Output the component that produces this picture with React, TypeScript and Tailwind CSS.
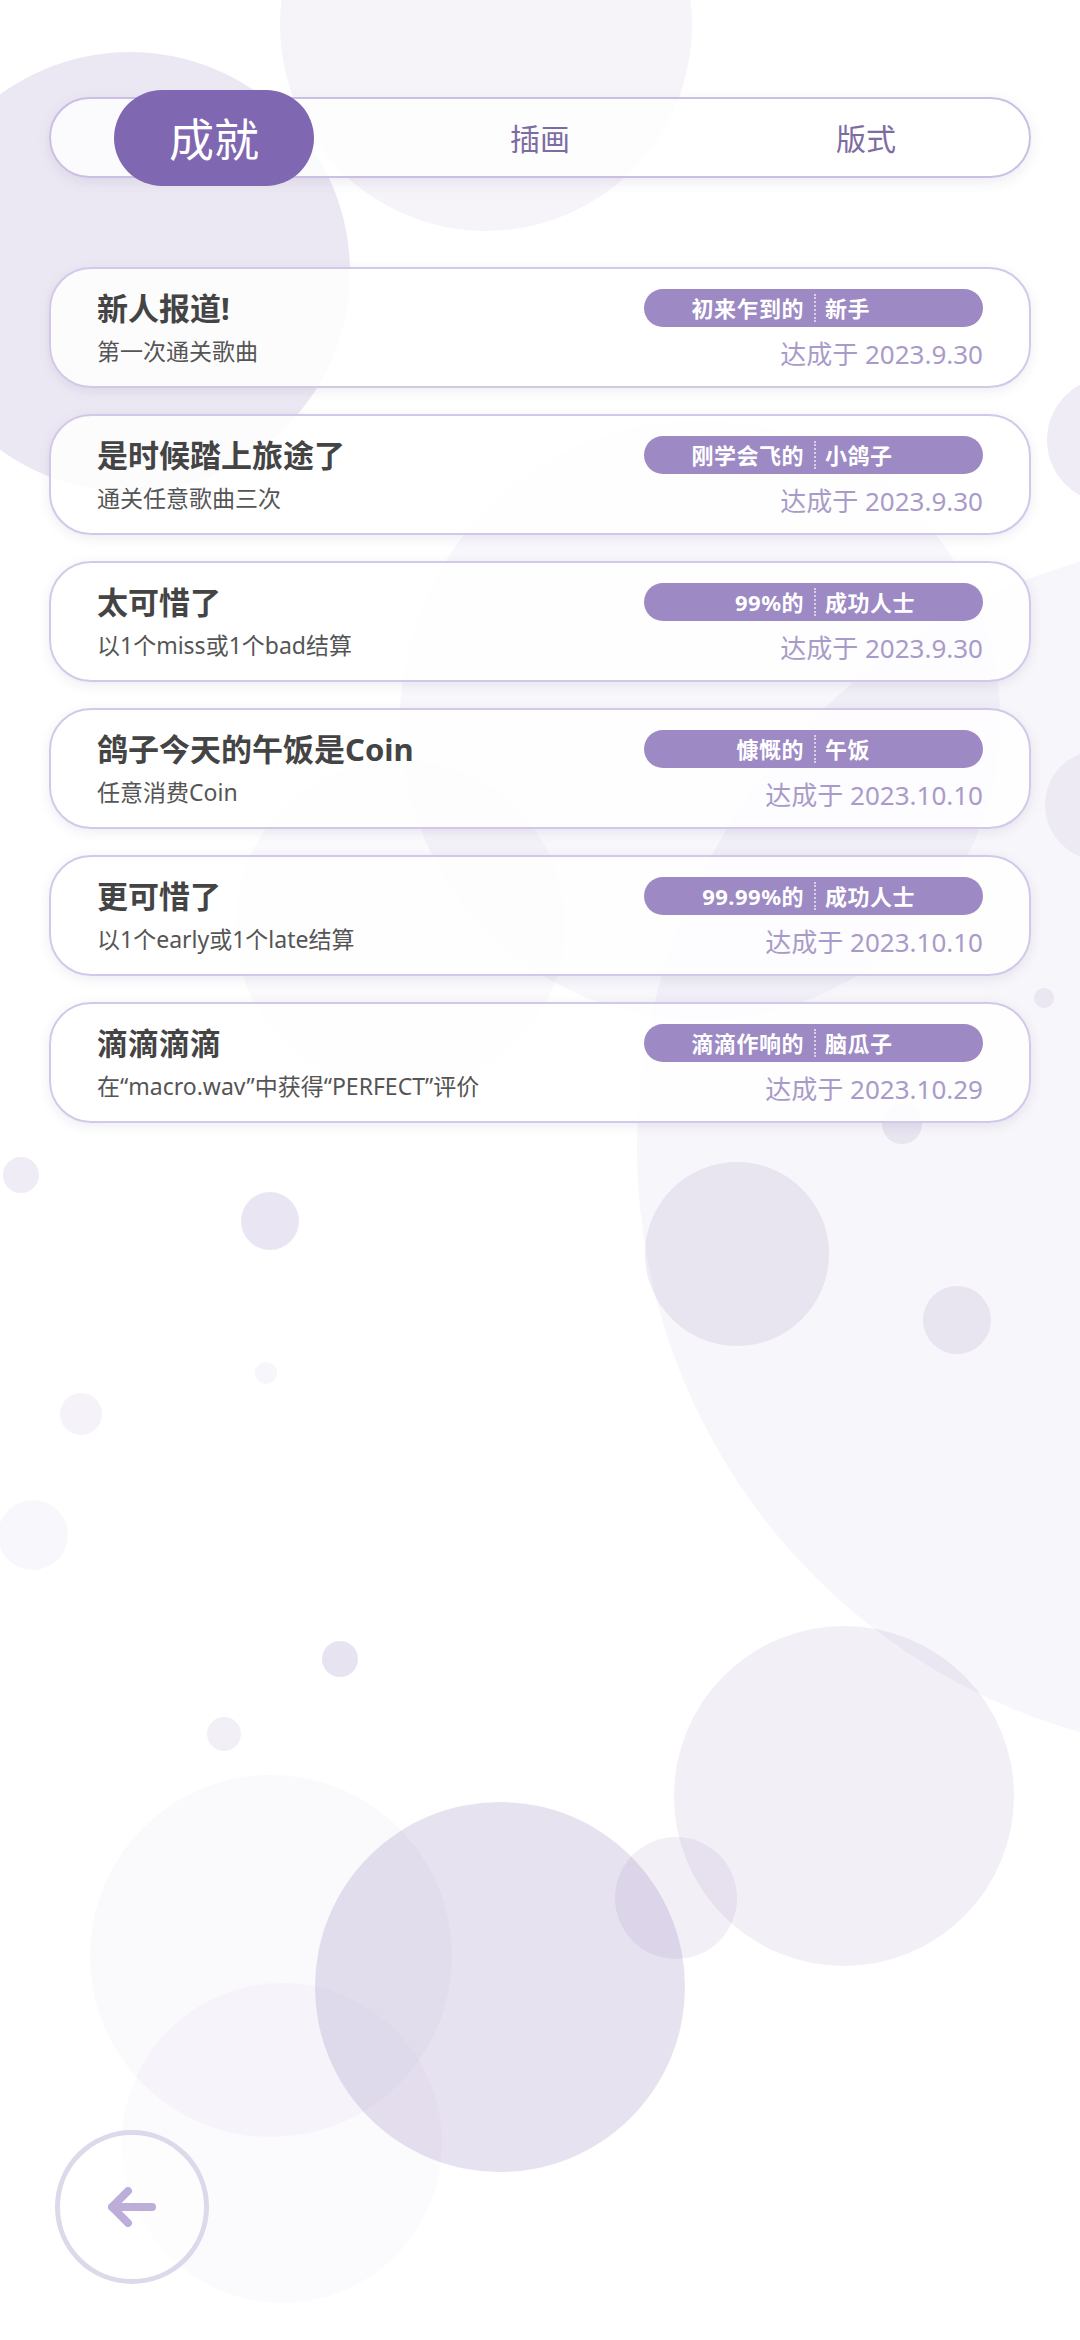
import React from "react";

const circles: { x: number; y: number; r: number; a: number }[] = [
  { x: 130, y: 272, r: 220, a: 0.15 },
  { x: 486, y: 25, r: 206, a: 0.07 },
  { x: 1110, y: 440, r: 63, a: 0.12 },
  { x: 1100, y: 805, r: 55, a: 0.08 },
  { x: 700, y: 720, r: 300, a: 0.05 },
  { x: 400, y: 925, r: 165, a: 0.04 },
  { x: 1245, y: 1147, r: 608, a: 0.06 },
  { x: 737, y: 1254, r: 92, a: 0.12 },
  { x: 957, y: 1320, r: 34, a: 0.12 },
  { x: 270, y: 1221, r: 29, a: 0.17 },
  { x: 21, y: 1175, r: 18, a: 0.12 },
  { x: 266, y: 1373, r: 11, a: 0.06 },
  { x: 81, y: 1414, r: 21, a: 0.08 },
  { x: 33, y: 1535, r: 35, a: 0.05 },
  { x: 340, y: 1659, r: 18, a: 0.18 },
  { x: 224, y: 1734, r: 17, a: 0.1 },
  { x: 844, y: 1796, r: 170, a: 0.1 },
  { x: 676, y: 1898, r: 61, a: 0.1 },
  { x: 500, y: 1987, r: 185, a: 0.19 },
  { x: 271, y: 1956, r: 181, a: 0.04 },
  { x: 282, y: 2143, r: 160, a: 0.03 },
  { x: 1044, y: 998, r: 10, a: 0.1 },
  { x: 902, y: 1124, r: 20, a: 0.12 },
];

const items = [
  { title: "新人报道!", sub: "第一次通关歌曲", l: "初来乍到的", r: "新手", date: "达成于 2023.9.30" },
  { title: "是时候踏上旅途了", sub: "通关任意歌曲三次", l: "刚学会飞的", r: "小鸽子", date: "达成于 2023.9.30" },
  { title: "太可惜了", sub: "以1个miss或1个bad结算", l: "99%的", r: "成功人士", date: "达成于 2023.9.30" },
  { title: "鸽子今天的午饭是Coin", sub: "任意消费Coin", l: "慷慨的", r: "午饭", date: "达成于 2023.10.10" },
  { title: "更可惜了", sub: "以1个early或1个late结算", l: "99.99%的", r: "成功人士", date: "达成于 2023.10.10" },
  { title: "滴滴滴滴", sub: "在“macro.wav”中获得“PERFECT”评价", l: "滴滴作响的", r: "脑瓜子", date: "达成于 2023.10.29" },
];

export default function App() {
  return (
    <div className="relative w-[1080px] h-[2340px] overflow-hidden bg-white font-['Noto_Sans','Noto_Sans_CJK_SC',sans-serif]">
      <div className="absolute inset-0">
        {circles.map((c, i) => (
          <div
            key={i}
            className="absolute rounded-full"
            style={{
              left: c.x - c.r,
              top: c.y - c.r,
              width: c.r * 2,
              height: c.r * 2,
              backgroundColor: `rgba(126,102,176,${c.a})`,
            }}
          />
        ))}
      </div>

      <div className="relative flex flex-col h-full">
        {/* tab bar */}
        <div className="mt-[97px] mx-[49px] h-[81px] rounded-full border-2 border-[#cbbfe4] bg-white/80 shadow-[0_4px_14px_rgba(80,60,120,0.10)] flex items-center">
          <div className="flex-1 h-full flex justify-center items-center">
            <div className="shrink-0 w-[200px] h-[96px] rounded-[48px] bg-[#7f67b1] flex items-center justify-center text-white text-[45px] leading-none font-['Noto_Sans_CJK_SC',sans-serif]">
              成就
            </div>
          </div>
          <div className="flex-1 h-full flex justify-center items-center text-[30px] text-[#7d6ca3] font-['Noto_Sans_CJK_SC',sans-serif]">插画</div>
          <div className="flex-1 h-full flex justify-center items-center text-[30px] text-[#7d6ca3] font-['Noto_Sans_CJK_SC',sans-serif]">版式</div>
        </div>

        {/* cards */}
        <div className="mt-[89px] mx-[49px] flex flex-col gap-[26px]">
          {items.map((it, i) => (
            <div
              key={i}
              className="h-[121px] rounded-[42px] border-2 border-[#d3c8ea] bg-white/85 shadow-[0_3px_12px_rgba(80,60,120,0.10)] flex justify-between items-start pt-[19px] pl-[46px] pr-[46px]"
            >
              <div className="flex flex-col">
                <div className="h-[40px] leading-[40px] text-[31px] font-bold text-[#444444] whitespace-nowrap">
                  {it.title}
                </div>
                <div className="mt-[7px] leading-[32px] text-[23px] text-[#555555] whitespace-nowrap">
                  {it.sub}
                </div>
              </div>
              <div className="flex flex-col items-end">
                <div className="mt-[1px] w-[339px] h-[38px] rounded-full bg-[#9d89c4] flex items-center text-white text-[22px] font-bold tracking-[0.5px]">
                  <div className="w-[170px] text-right pr-[10px] whitespace-nowrap">{it.l}</div>
                  <div className="h-[28px] border-l-2 border-dotted border-white/60" />
                  <div className="flex-1 pl-[9px] whitespace-nowrap">{it.r}</div>
                </div>
                <div className="mt-[10px] leading-[34px] text-[26px] text-[#a99bc9] whitespace-nowrap">
                  {it.date}
                </div>
              </div>
            </div>
          ))}
        </div>

        {/* back button */}
        <div className="mt-auto mb-[56px] ml-[55px] w-[154px] h-[154px] rounded-full border-[5px] border-[#ddd8ea] bg-white/60 flex items-center justify-center">
          <svg width="48" height="40" viewBox="0 0 48 40" fill="none">
            <path
              d="M20 4 L4 20 L20 36 M4 20 H44"
              stroke="#bcaed8"
              strokeWidth="8"
              strokeLinecap="round"
              strokeLinejoin="round"
            />
          </svg>
        </div>
      </div>
    </div>
  );
}
